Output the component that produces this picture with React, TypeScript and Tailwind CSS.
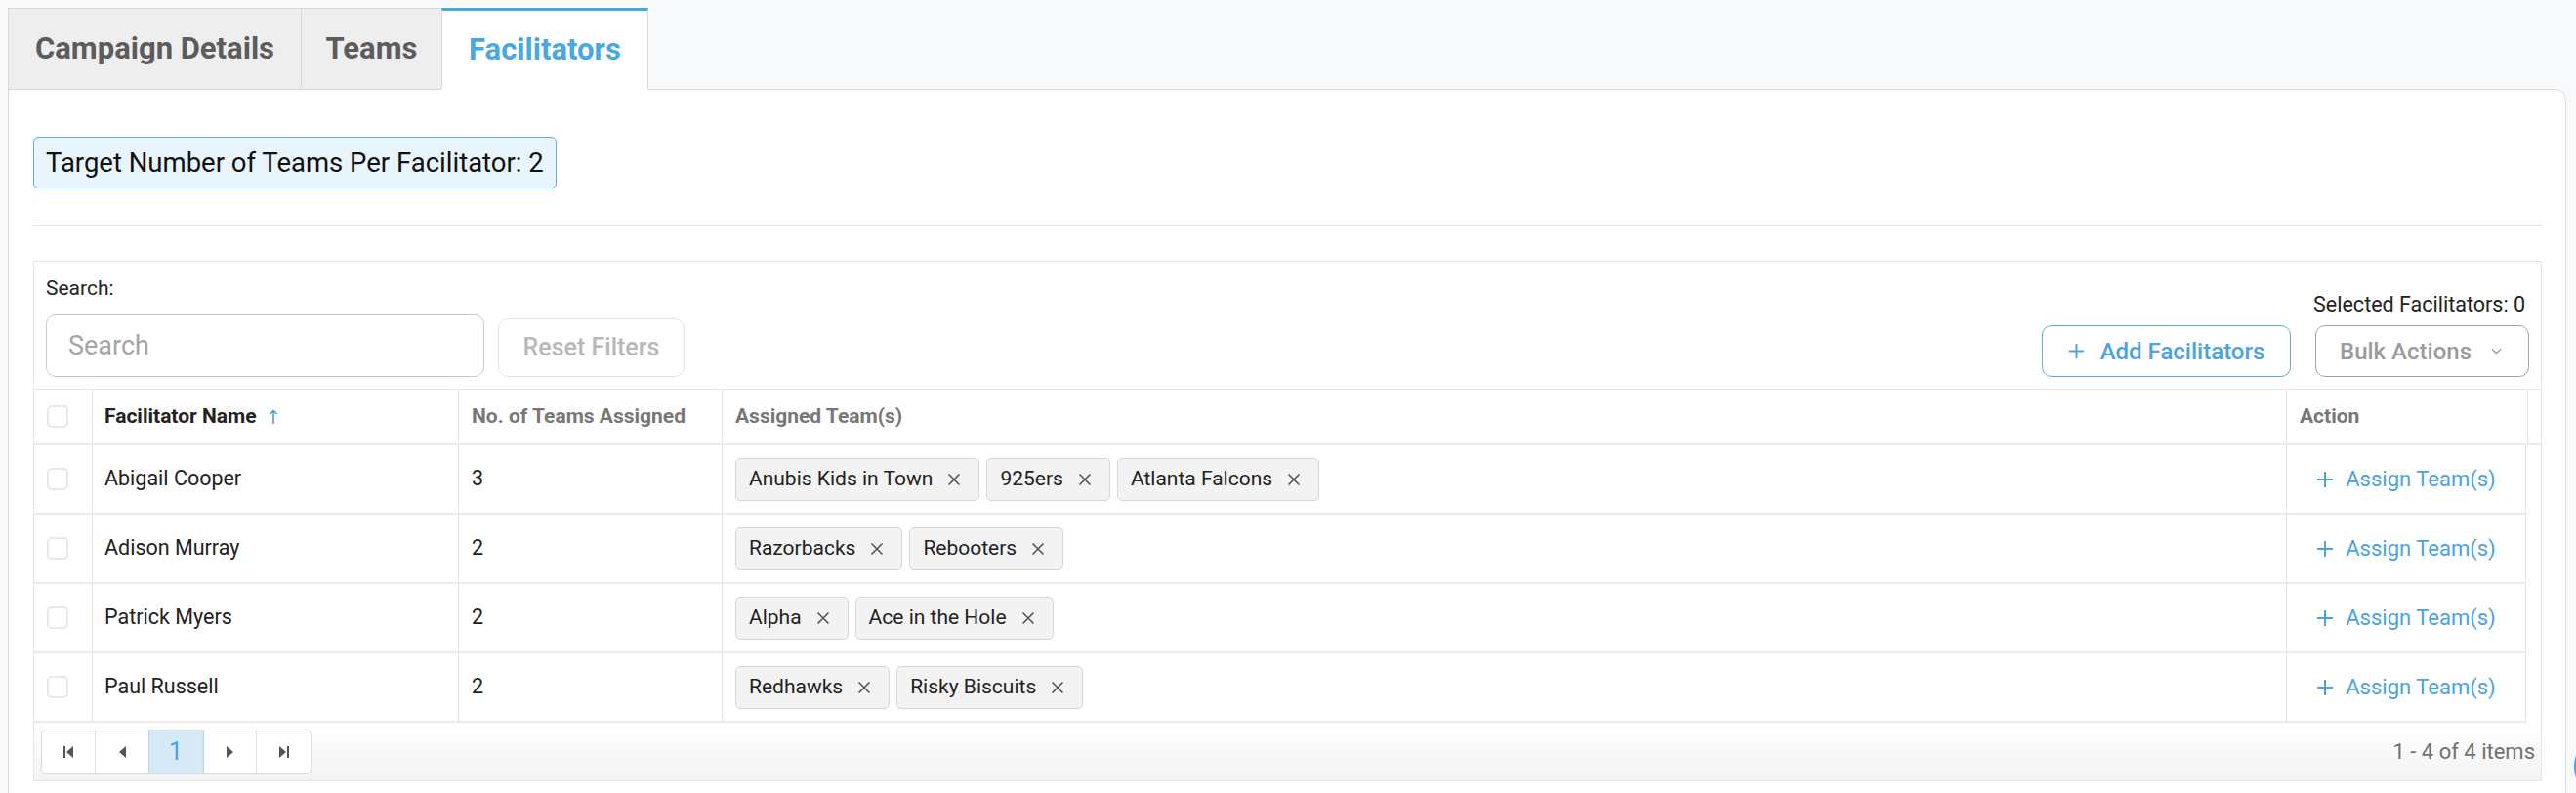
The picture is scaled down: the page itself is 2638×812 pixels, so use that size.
import React from "react";

const rows = [
  { name: "Abigail Cooper", count: 3, teams: ["Anubis Kids in Town", "925ers", "Atlanta Falcons"] },
  { name: "Adison Murray", count: 2, teams: ["Razorbacks", "Rebooters"] },
  { name: "Patrick Myers", count: 2, teams: ["Alpha", "Ace in the Hole"] },
  { name: "Paul Russell", count: 2, teams: ["Redhawks", "Risky Biscuits"] },
];

const PlusIcon = ({ className = "" }: { className?: string }) => (
  <svg viewBox="0 0 18 18" className={className} fill="none" stroke="currentColor" strokeWidth="2">
    <path d="M9 1v16M1 9h16" />
  </svg>
);

const CloseIcon = () => (
  <svg viewBox="0 0 14 14" className="w-[14px] h-[14px]" fill="none" stroke="#555" strokeWidth="1.6">
    <path d="M1.5 1.5l11 11M12.5 1.5l-11 11" />
  </svg>
);

const Checkbox = () => (
  <div className="w-[22px] h-[23px] rounded-[5px] border-2 border-[#e8e8e8] bg-white" />
);

const Tag = ({ label }: { label: string }) => (
  <div className="flex items-center gap-[15px] h-[44px] pl-[13px] pr-[18px] rounded-[5px] border border-[#d6d6d6] bg-[#f3f3f3] text-[21px] text-[#222]">
    <span>{label}</span>
    <CloseIcon />
  </div>
);

const PageBtn = ({ children, active }: { children: React.ReactNode; active?: boolean }) => (
  <div
    className={`w-[55px] h-full flex items-center justify-center border-r border-[#e0e0e0] last:border-r-0 ${
      active ? "bg-[#d6e9f7] outline outline-[#b3d5ec] text-[#4aa3df] text-[25px]" : "text-[#555]"
    }`}>
    {children}
  </div>
);

export default function App() {
  return (
    <div
      className="relative w-[2638px] h-[812px] overflow-hidden bg-[#f8f9fb] pt-[8px] pl-[8px] pr-[10px]"
      style={{ fontFamily: "Roboto, 'Liberation Sans', sans-serif" }}>
      {/* tabs */}
      <div className="relative z-10 flex -mb-px text-[31px] font-bold">
        <div className="w-[300px] h-[84px] flex items-center justify-center bg-[#eeeeee] border-t border-l border-b border-[#d9d9d9] text-[#5c5c5c]">
          Campaign Details
        </div>
        <div className="w-[144px] h-[84px] flex items-center justify-center bg-[#eeeeee] border-t border-l border-b border-[#d9d9d9] text-[#5c5c5c]">
          Teams
        </div>
        <div className="w-[212px] h-[84px] flex items-center justify-center bg-white border-t-[3px] border-t-[#4aa8e1] border-l border-r border-[#d9d9d9] border-b border-b-white text-[#4aa8e1]">
          Facilitators
        </div>
      </div>

      {/* card */}
      <div className="h-[760px] bg-white border border-[#dadada] rounded-tr-[12px] pl-[25px] pr-[24px] pt-[48px]">
        <div className="inline-flex items-center h-[53px] w-[536px] px-[12px] rounded-[5px] border border-[#5eaee3] bg-[#e8f5fc] text-[27.5px] text-[#111]">
          Target Number of Teams Per Facilitator: 2
        </div>
        <div className="mt-[37px] border-t border-[#e1e1e1]" />

        {/* table */}
        <div className="mt-[36px] border border-[#e6e6e6]">
          <div className="flex justify-between items-end px-[12px] pt-[15px] pb-[12px] border-b border-[#e6e6e6]">
            <div>
              <div className="h-[24px] leading-[24px] text-[21px] text-[#222]">Search:</div>
              <div className="mt-[15px] flex items-end gap-[14px]">
                <div className="w-[449px] h-[64px] rounded-[10px] border border-[#c9c9c9] flex items-center pl-[22px] text-[27px] text-[#a5a5a5]">
                  Search
                </div>
                <button className="w-[191px] h-[60px] rounded-[10px] border border-[#e3e3e3] text-[25px] font-medium text-[#b8b8b8]">
                  Reset Filters
                </button>
              </div>
            </div>
            <div className="flex flex-col items-end">
              <div className="h-[24px] leading-[24px] text-[21.5px] text-[#222] pr-[4px]">Selected Facilitators: 0</div>
              <div className="mt-[9px] flex gap-[25px]">
                <button className="w-[255px] h-[53px] rounded-[10px] border border-[#5eaee3] flex items-center justify-center gap-[16px] text-[24px] font-medium text-[#4aa3df]">
                  <PlusIcon className="w-[17px] h-[17px]" />
                  Add Facilitators
                </button>
                <button className="w-[219px] h-[53px] rounded-[10px] border border-[#a3a3a3] flex items-center pl-[24px] gap-[20px] text-[24px] font-medium text-[#9b9b9b]">
                  Bulk Actions
                  <svg viewBox="0 0 12 7" className="w-[11px] h-[7px]" fill="none" stroke="#9b9b9b" strokeWidth="1.3">
                    <path d="M1 1l5 5 5-5" />
                  </svg>
                </button>
              </div>
            </div>
          </div>

          {/* header */}
          <div className="grid grid-cols-[60px_375px_270px_1602px_247px_1fr] h-[57px] border-b-2 border-[#ebebeb] text-[21px] font-bold text-[#777]">
            <div className="flex items-center pl-[13px] border-r border-[#e4e4e4]">
              <Checkbox />
            </div>
            <div className="flex items-center pl-[12px] gap-[12px] border-r border-[#e4e4e4] text-[#222]">
              Facilitator Name
              <svg viewBox="0 0 10 16" className="w-[10px] h-[16px]" fill="none" stroke="#4aa3df" strokeWidth="1.6">
                <path d="M5 15V1.5M1.5 5L5 1.5 8.5 5" />
              </svg>
            </div>
            <div className="flex items-center pl-[13px] border-r border-[#e4e4e4]">No. of Teams Assigned</div>
            <div className="flex items-center pl-[13px] border-r border-[#e4e4e4]">Assigned Team(s)</div>
            <div className="flex items-center pl-[13px] border-r border-[#e4e4e4]">Action</div>
            <div />
          </div>

          {rows.map((r) => (
            <div
              key={r.name}
              className="grid grid-cols-[60px_375px_270px_1602px_245px_1fr] h-[71px] text-[21.5px] text-[#222]">
              <div className="flex items-center pl-[13px] border-r border-b-2 border-r-[#e4e4e4] border-b-[#ebebeb]">
                <Checkbox />
              </div>
              <div className="flex items-center pl-[12px] border-r border-b-2 border-r-[#e4e4e4] border-b-[#ebebeb]">{r.name}</div>
              <div className="flex items-center pl-[13px] border-r border-b-2 border-r-[#e4e4e4] border-b-[#ebebeb]">{r.count}</div>
              <div className="flex items-center gap-[7px] pl-[13px] border-r border-b-2 border-r-[#e4e4e4] border-b-[#ebebeb]">
                {r.teams.map((t) => (
                  <Tag key={t} label={t} />
                ))}
              </div>
              <div className="flex items-center justify-center gap-[12px] border-r border-b-2 border-r-[#e4e4e4] border-b-[#ebebeb] text-[22px] text-[#4aa3df]">
                <PlusIcon className="w-[18px] h-[18px]" />
                Assign Team(s)
              </div>
              <div />
            </div>
          ))}

          {/* footer */}
          <div className="h-[59px] flex items-center justify-between pl-[7px] pr-[6px] bg-linear-to-b from-white to-[#f3f3f3]">
            <div className="flex h-[46px] rounded-[5px] border border-[#dcdcdc] bg-white overflow-hidden">
              <PageBtn>
                <svg viewBox="0 0 10 12" className="w-[10px] h-[12px]" fill="currentColor">
                  <rect x="0" y="0" width="2" height="12" />
                  <path d="M10 0v12L3 6z" />
                </svg>
              </PageBtn>
              <PageBtn>
                <svg viewBox="0 0 7 12" className="w-[7px] h-[12px]" fill="currentColor">
                  <path d="M7 0v12L0 6z" />
                </svg>
              </PageBtn>
              <PageBtn active>1</PageBtn>
              <PageBtn>
                <svg viewBox="0 0 7 12" className="w-[7px] h-[12px]" fill="currentColor">
                  <path d="M0 0v12l7-6z" />
                </svg>
              </PageBtn>
              <PageBtn>
                <svg viewBox="0 0 10 12" className="w-[10px] h-[12px]" fill="currentColor">
                  <path d="M0 0v12l7-6z" />
                  <rect x="8" y="0" width="2" height="12" />
                </svg>
              </PageBtn>
            </div>
            <div className="text-[22px] text-[#707070]">1 - 4 of 4 items</div>
          </div>
        </div>
      </div>

      {/* floating help button, mostly off screen */}
      <div className="absolute left-[2636px] top-[748px] w-[74px] h-[74px] rounded-full bg-[#4aa3df]" />
    </div>
  );
}
